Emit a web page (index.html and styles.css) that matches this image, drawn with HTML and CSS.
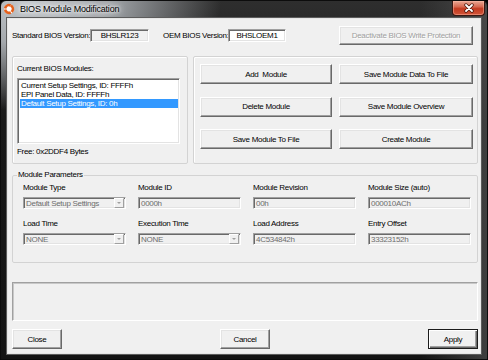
FILE: index.html
```html
<!DOCTYPE html>
<html lang="en">
<head>
    <meta charset="UTF-8">
    <title>BIOS Module Modification</title>
    <link rel="stylesheet" href="styles.css">
</head>
<body>

<div class="window">
    <div class="titlebar">
        <svg class="app-icon" viewBox="0 0 12 12">
            <circle cx="6" cy="6" r="5" fill="#fff"/>
            <circle cx="6" cy="6" r="3.9" fill="none" stroke="#e4601c" stroke-width="2.6" stroke-dasharray="7.2 1" transform="rotate(-60 6 6)"/>
        </svg>
        <span class="title">BIOS Module Modification</span>
        <div class="close-btn">
            <svg viewBox="0 0 12 10" width="12" height="10">
                <path d="M3 2 L9 8 M9 2 L3 8" stroke="#4a1a10" stroke-width="3.4" stroke-linecap="round"/>
                <path d="M3 2 L9 8 M9 2 L3 8" stroke="#fff" stroke-width="1.8" stroke-linecap="round"/>
            </svg>
        </div>
    </div>

    <div class="client">
        <!-- versions -->
        <div class="version-row">
            <span class="lbl lbl-std">Standard BIOS Version:</span>
            <span class="field ver std-ver">BHSLR123</span>
            <span class="lbl lbl-oem">OEM BIOS Version:</span>
            <span class="field ver oem-ver">BHSLOEM1</span>
            <button class="btn btn-off btn-protect">Deactivate BIOS Write Protection</button>
        </div>

        <div class="groups">
            <div class="group modules">
                <div class="lbl">Current BIOS Modules:</div>
                <ul class="listbox">
                    <li>Current Setup Settings, ID: FFFFh</li>
                    <li>EPI Panel Data, ID: FFFFh</li>
                    <li class="selected">Default Setup Settings, ID: 0h</li>
                </ul>
                <div class="lbl free">Free: 0x2DDF4 Bytes</div>
            </div>
            <div class="group actions">
                <button class="btn">Add&nbsp; Module</button>
                <button class="btn">Save Module Data To File</button>
                <button class="btn">Delete Module</button>
                <button class="btn">Save Module Overview</button>
                <button class="btn">Save Module To File</button>
                <button class="btn">Create Module</button>
            </div>
        </div>

        <fieldset class="params">
            <legend>Module Parameters</legend>
            <div class="param-grid">
                <div class="param">
                    <span class="lbl">Module Type</span>
                    <div class="field combo"><span>Default Setup Settings</span><i class="drop"></i></div>
                </div>
                <div class="param">
                    <span class="lbl">Module ID</span>
                    <div class="field"><span>0000h</span></div>
                </div>
                <div class="param">
                    <span class="lbl">Module Revision</span>
                    <div class="field"><span>00h</span></div>
                </div>
                <div class="param">
                    <span class="lbl">Module Size (auto)</span>
                    <div class="field"><span>000010ACh</span></div>
                </div>
                <div class="param">
                    <span class="lbl">Load Time</span>
                    <div class="field combo"><span>NONE</span><i class="drop"></i></div>
                </div>
                <div class="param">
                    <span class="lbl">Execution Time</span>
                    <div class="field combo"><span>NONE</span><i class="drop"></i></div>
                </div>
                <div class="param">
                    <span class="lbl">Load Address</span>
                    <div class="field"><span>4C534842h</span></div>
                </div>
                <div class="param">
                    <span class="lbl">Entry Offset</span>
                    <div class="field"><span>33323152h</span></div>
                </div>
            </div>
        </fieldset>

        <div class="status"></div>

        <div class="bottom-row">
            <button class="btn">Close</button>
            <button class="btn">Cancel</button>
            <button class="btn btn-default">Apply</button>
        </div>
    </div>
</div>

</body>
</html>
```

FILE: styles.css
```css
*{
    margin: 0;
    padding: 0;
    box-sizing: border-box;
}
body{
    width: 488px;
    height: 360px;
    background-color: #000;
    font-family: "Liberation Sans", Arial, sans-serif;
    font-size: 8px;
    letter-spacing: -0.3px;
    color: #000;
    overflow: hidden;
}

/* window frame */
.window{
    width: 488px;
    height: 360px;
    display: flex;
    flex-direction: column;
    border: 1px solid #0c0c0c;
    border-radius: 6px 6px 0 0;
    background:
        radial-gradient(ellipse 190px 110px at 30px 0, #c4c8cc 0%, #a4a8ac 40%, rgba(40,40,40,0) 100%),
        linear-gradient(to right, rgba(0,0,0,0) 0, rgba(0,0,0,0) 420px, rgba(90,90,90,.6) 100%),
        linear-gradient(#2e2e2e 0, #181818 120px, #141414 100%);
}
.titlebar{
    height: 18px;
    display: flex;
    align-items: flex-start;
    padding-left: 2px;
}
.app-icon{
    width: 12px;
    height: 12px;
    margin-top: 2px;
}
.title{
    margin-left: 5px;
    margin-top: 2px;
    font-size: 9px;
    line-height: 12px;
    letter-spacing: -0.2px;
    color: #000;
    text-shadow: 0 0 3px #fff, 0 0 6px #fff, 0 0 9px rgba(255,255,255,.8);
}
.close-btn{
    margin-left: auto;
    margin-right: 2px;
    width: 33px;
    height: 15px;
    display: flex;
    align-items: center;
    justify-content: center;
    border: 1px solid #3a1610;
    border-top: 0;
    border-radius: 0 0 4px 4px;
    background: linear-gradient(#e9a895 0, #d66a52 40%, #c23a20 55%, #d2553a 100%);
    box-shadow: inset 0 0 0 1px rgba(255,190,170,.45);
}

/* client area */
.client{
    flex: 1;
    margin: 0 6px 5px 6px;
    padding: 7px 2px 4px 4px;
    background-color: #f0f0f0;
    border: 1px solid #e6e6e6;
    box-shadow: 0 0 0 1px #5c5c5c;
    display: flex;
    flex-direction: column;
}
.lbl{
    line-height: 10px;
    white-space: nowrap;
}

/* buttons */
.btn{
    font: inherit;
    letter-spacing: inherit;
    color: #000;
    background-color: #f0f0f0;
    border: 1px solid;
    border-color: #fff #696969 #696969 #fff;
    box-shadow: inset -1px -1px #a0a0a0, inset 1px 1px #e3e3e3;
    white-space: nowrap;
}
.btn-off{
    color: #a0a0a0;
    text-shadow: 1px 1px #fff;
}
.btn-default{
    border: 1px solid #1c1c1c;
    box-shadow: inset 1px 1px #fff, inset -1px -1px #696969, inset -2px -2px #a0a0a0;
}

/* sunken fields */
.field{
    display: flex;
    align-items: center;
    height: 12px;
    padding-left: 2px;
    color: #6d6d6d;
    background-color: #f0f0f0;
    border: 1px solid;
    border-color: #a0a0a0 #fff #fff #a0a0a0;
    box-shadow: inset 1px 1px #696969, inset -1px -1px #e3e3e3;
    white-space: nowrap;
    overflow: hidden;
}

.version-row{
    display: flex;
    align-items: center;
    height: 19px;
}
.lbl-std{
    width: 78px;
}
.lbl-oem{
    width: 65px;
    margin-left: 14px;
}
.ver{
    height: 13px;
    justify-content: center;
    padding-left: 0;
    color: #000;
}
.std-ver{
    width: 59px;
}
.oem-ver{
    width: 58px;
    background-color: #fff;
}
.btn-protect{
    margin-left: auto;
    margin-right: 5px;
    width: 134px;
    height: 19px;
}

/* module list + actions */
.groups{
    display: flex;
    gap: 5px;
    margin-top: 11px;
    height: 108px;
}
.group{
    border: 1px solid #d3d3d3;
    border-radius: 2px;
    box-shadow: inset 1px 1px #fff;
}
.modules{
    width: 176px;
    padding: 7px 0 0 4px;
}
.listbox{
    list-style: none;
    margin-top: 4px;
    width: 163px;
    height: 66px;
    background-color: #fff;
    border: 1px solid;
    border-color: #a0a0a0 #fff #fff #a0a0a0;
    box-shadow: inset 1px 1px #696969, inset -1px -1px #e3e3e3;
    padding: 2px 1px 0 2px;
}
.listbox li{
    height: 9px;
    line-height: 9px;
    padding-left: 1px;
    white-space: nowrap;
}
.listbox .selected{
    background-color: #3399ff;
    color: #fff;
}
.free{
    margin-top: 3px;
}
.actions{
    flex: 1;
    padding: 7px 0 0 6px;
    display: grid;
    grid-template-columns: 132px 134px;
    grid-auto-rows: 20px;
    column-gap: 7px;
    row-gap: 12.5px;
    align-content: start;
}

/* module parameters */
.params{
    margin-top: 6px;
    height: 93px;
    padding: 0 0 0 4px;
    border: 1px solid #d3d3d3;
    border-radius: 2px;
}
.params legend{
    padding: 0 1px;
    line-height: 10px;
}
.param-grid{
    margin: 3px 0 0 6px;
    display: grid;
    grid-template-columns: repeat(4, 103px);
    column-gap: 12px;
    row-gap: 10px;
}
.param{
    display: flex;
    flex-direction: column;
    gap: 4px;
}
.combo{
    position: relative;
    justify-content: space-between;
    padding-right: 1px;
}
.drop{
    width: 10px;
    height: 10px;
    background-color: #f0f0f0;
    border: 1px solid;
    border-color: #fff #a0a0a0 #a0a0a0 #fff;
    display: flex;
    align-items: center;
    justify-content: center;
}
.drop::after{
    content: "";
    border-left: 2.5px solid transparent;
    border-right: 2.5px solid transparent;
    border-top: 2.5px solid #a0a0a0;
}

.status{
    margin-top: 19px;
    height: 39px;
    border: 1px solid;
    border-color: #a0a0a0 #fff #fff #a0a0a0;
    box-shadow: inset 1px 1px #c8c8c8;
}

.bottom-row{
    margin-top: 8px;
    display: flex;
    justify-content: space-between;
}
.bottom-row .btn{
    width: 50px;
    height: 20px;
}
```
